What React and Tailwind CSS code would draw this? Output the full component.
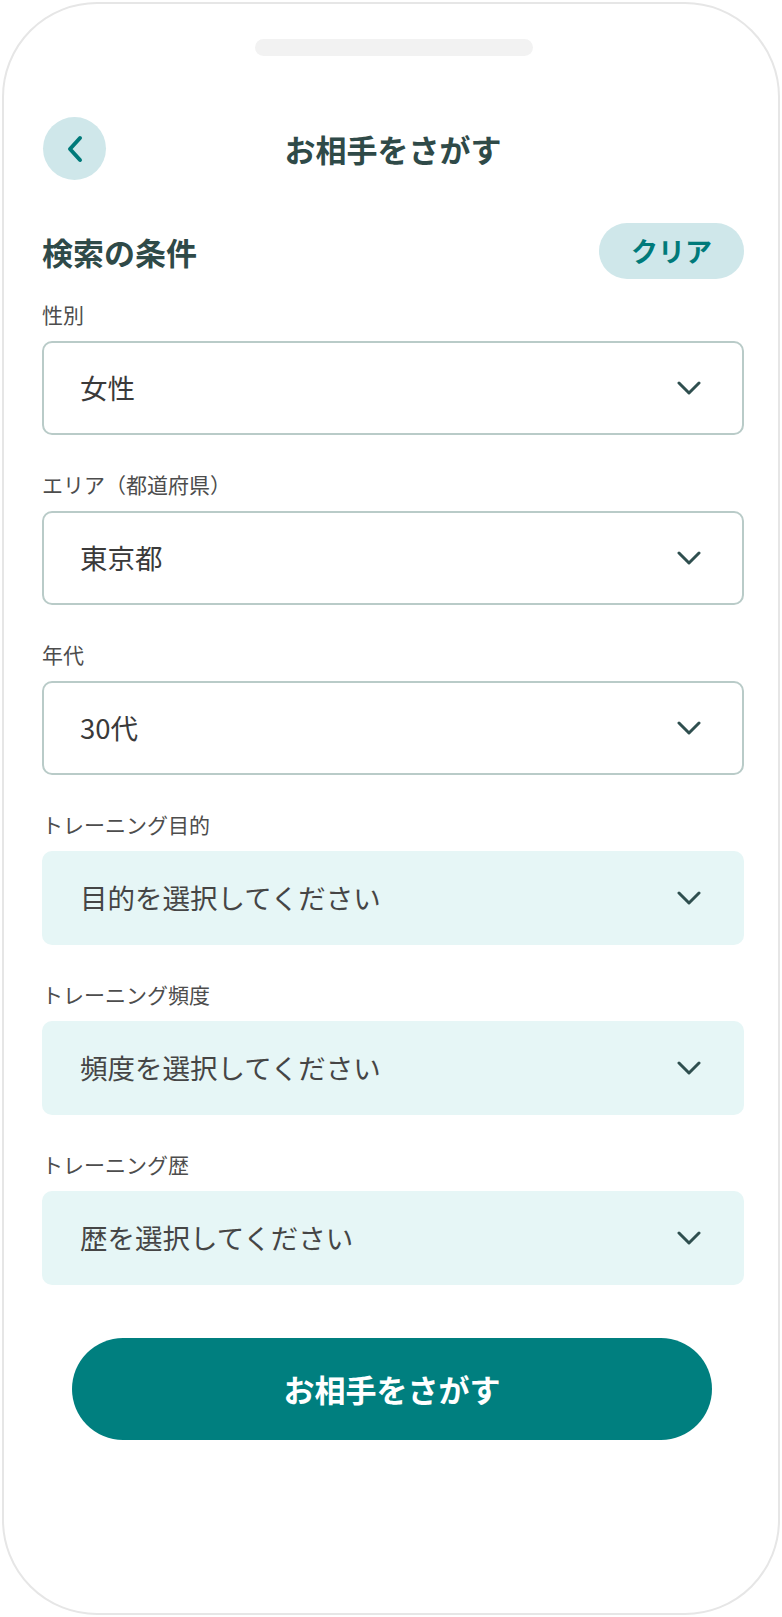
import React from "react";

const font = { fontFamily: '"Noto Sans CJK JP", "Noto Sans", sans-serif' };

function Chevron() {
  return (
    <svg width="24" height="14" viewBox="0 0 24 14" fill="none" className="shrink-0">
      <polyline points="2,2 12,12 22,2" stroke="#2f4f4f" strokeWidth="3" strokeLinecap="round" strokeLinejoin="round" />
    </svg>
  );
}

function Field({ label, value, filled }) {
  return (
    <div className="flex flex-col">
      <div className="text-[21px] leading-[28px] text-[#4d4d4d] mb-[13px]">{label}</div>
      <div
        className={
          filled
            ? "h-[94px] rounded-[10px] bg-[#e6f6f6] flex items-center justify-between pl-[38px] pr-[43px]"
            : "h-[94px] rounded-[10px] bg-white border-2 border-[#b9cbc8] flex items-center justify-between pl-[36px] pr-[41px]"
        }
      >
        <span className={filled ? "text-[27.5px] text-[#454545]" : "text-[27.5px] text-[#3a3a3a]"}>{value}</span>
        <Chevron />
      </div>
    </div>
  );
}

export default function App() {
  return (
    <div className="w-[782px] h-[1617px] p-[2px] bg-white" style={font}>
      <div className="h-full w-full rounded-[95px] border-2 border-[#e6e6e6] bg-white flex flex-col items-stretch">
        <div className="flex justify-center pt-[35px]">
          <div className="w-[278px] h-[17px] rounded-full bg-[#f2f2f2] ml-[6px]" />
        </div>
        <div className="pl-[38px] pr-[34px] flex flex-col">
          {/* header */}
          <div className="relative h-[63px] mt-[61px] flex items-center justify-center">
            <div className="absolute left-[1px] top-0 w-[63px] h-[63px] rounded-full bg-[#cfe7ea] flex items-center justify-center">
              <svg width="18" height="28" viewBox="0 0 18 28" fill="none">
                <polyline points="14,3 4,14 14,25" stroke="#007a7a" strokeWidth="4" strokeLinecap="round" strokeLinejoin="round" />
              </svg>
            </div>
            <h1 className="text-[31px] font-bold text-[#2f4a48] leading-none">お相手をさがす</h1>
          </div>
          {/* heading row */}
          <div className="h-[56px] mt-[43px] flex items-center justify-between">
            <h2 className="text-[31px] font-bold text-[#2f4a48] leading-none">検索の条件</h2>
            <button className="w-[145px] h-[56px] rounded-full bg-[#cfe7ea] text-[27px] font-bold text-[#007a7a] flex items-center justify-center">
              クリア
            </button>
          </div>
          <div className="flex flex-col gap-[35px] mt-[21px]">
            <Field label="性別" value="女性" />
            <Field label="エリア（都道府県）" value="東京都" />
            <Field label="年代" value="30代" />
            <Field label="トレーニング目的" value="目的を選択してください" filled />
            <Field label="トレーニング頻度" value="頻度を選択してください" filled />
            <Field label="トレーニング歴" value="歴を選択してください" filled />
          </div>
          <button className="mt-[53px] ml-[30px] mr-[32px] h-[102px] rounded-full bg-[#007f7f] text-white text-[31px] font-bold flex items-center justify-center">
            お相手をさがす
          </button>
        </div>
      </div>
    </div>
  );
}
